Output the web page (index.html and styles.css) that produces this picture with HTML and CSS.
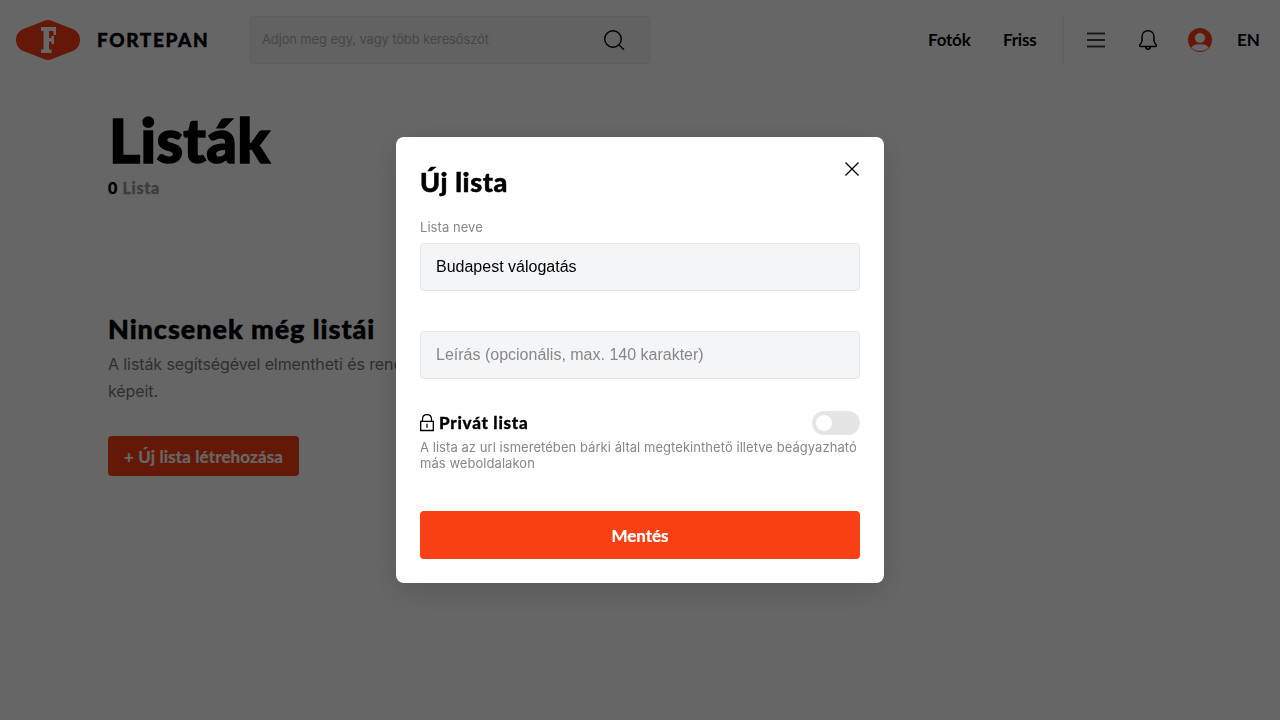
FILE: index.html
```html
<!DOCTYPE html>
<html lang="hu">
<head>
<meta charset="utf-8">
<title>Fortepan – Listák</title>
<link rel="stylesheet" href="styles.css">
</head>
<body>
<header class="header">
  <a class="brand">
    <svg class="brand-logo" width="64" height="40" viewBox="0 0 64 40">
      <path d="M28 .9Q32-.8 36 .9L58 9.500Q64 13 64 20T58 30.500L36 39.100Q32 40.800 28 39.100L6 30.500Q0 27 0 20T6 9.500Z" fill="#f93f14"/>
      <path d="M25 7H40V15H37.500V11H33V18H35.500V16H38V24H35.500V21.500H33V29.500H35.500V33H25V29.500H27.500V11H25Z" fill="#fff"/>
    </svg>
    <span class="brand-name">FORTEPAN</span>
  </a>
  <div class="search">
    <span class="search-text">Adjon meg egy, vagy több keresőszót</span>
    <svg width="24" height="24" viewBox="0 0 24 24" fill="none" stroke="#000" stroke-width="1.400"><circle cx="11" cy="11" r="8.300"/><path d="M17 17l5 4.800"/></svg>
  </div>
  <nav class="nav">
    <a class="nav-photos">Fotók</a>
    <a class="nav-fresh">Friss</a>
    <div class="nav-tools">
      <svg width="24" height="24" viewBox="0 0 24 24" stroke="#444" stroke-width="1.800"><path d="M3 5.500h18M3 12h18M3 18.500h18"/></svg>
      <svg width="24" height="24" viewBox="0 0 24 24" fill="none" stroke="#000" stroke-width="1.500" stroke-linejoin="round"><path d="M12 2.700C8.300 2.700 6 5.300 6 9v3.500C6 15.400 3.600 15.700 3.600 17.600c0 .8.500 1 1.200 1h14.400c.7 0 1.200-.2 1.200-1 0-1.900-2.400-2.200-2.400-5.100V9c0-3.700-2.300-6.300-6-6.300zM9.700 18.900c.2 1.600 1 2.400 2.300 2.400s2.100-.8 2.300-2.400"/></svg>
      <svg width="24" height="24" viewBox="0 0 24 24"><circle cx="12" cy="12" r="12" fill="#f93f14"/><path d="M3.300 19.500C5.500 16.900 8.400 16 12 16s6.500.9 8.700 3.500C18.500 22 15.300 23 12 23s-6.500-1-8.700-3.500z" fill="#fff"/><circle cx="12" cy="10" r="5.800" fill="#fff" stroke="#f93f14" stroke-width="1.400"/></svg>
      <a class="nav-lang">EN</a>
    </div>
  </nav>
</header>
<main class="page">
  <h1 class="page-title">Listák</h1>
  <p class="count"><span class="count-value">0</span> Lista</p>
  <section class="empty">
    <h2 class="empty-title">Nincsenek még listái</h2>
    <p class="empty-text">A listák segítségével elmentheti és rendezheti képeit.</p>
    <button class="create"><span class="create-label">+ Új lista létrehozása</span></button>
  </section>
</main>
<div class="overlay">
  <div class="dialog">
    <div class="dialog-head">
      <h2 class="dialog-title">Új lista</h2>
      <svg class="close" width="16" height="16" viewBox="0 0 16 16" stroke="#000" stroke-width="1.300"><path d="M1.500 1.500l13 13M14.500 1.500l-13 13"/></svg>
    </div>
    <div class="label">Lista neve</div>
    <div class="field"><span class="field-value">Budapest válogatás</span></div>
    <div class="field field-second"><span class="field-placeholder">Leírás (opcionális, max. 140 karakter)</span></div>
    <div class="private">
      <svg width="14" height="18" viewBox="0 0 14 18" fill="none" stroke="#000" stroke-width="1.300"><path d="M.7 7.300h12.600v9.200H.7zM2.500 7.300V5.200C2.500 2.500 4.300.7 7 .7s4.500 1.800 4.500 4.500v2.100M7 9.800v4"/></svg>
      <span class="private-title">Privát lista</span>
      <span class="toggle"></span>
    </div>
    <p class="help">A lista az url ismeretében bárki által megtekinthető illetve beágyazható<br>más weboldalakon</p>
    <button class="save"><span class="save-label">Mentés</span></button>
  </div>
</div>
</body>
</html>
```
FILE: styles.css
```css
* { box-sizing: border-box; margin: 0; padding: 0; }
body { width: 1280px; height: 720px; overflow: hidden; background: #fff; color: #000; font-family: Inter, sans-serif; }
svg { display: block; flex: none; }
button { border: 0; font: inherit; }
span, a { white-space: nowrap; }

.header { display: flex; align-items: center; height: 80px; padding: 0 20px 0 16px; }
.brand { display: flex; align-items: center; width: 234px; }
.brand-name { margin-left: 17px; font: 900 19px/24px Lato, sans-serif; letter-spacing: 1.6px; -webkit-text-stroke: .4px; }
.search { display: flex; align-items: center; justify-content: space-between; width: 400px; height: 48px; padding: 0 23px 0 11px; background: #f4f4f8; border: 1px solid #e8e8ec; border-radius: 4px; }
.search-text { font-size: 13px; line-height: 20px; color: #b0b0b0; padding-bottom: 3px; letter-spacing: -.14px; }
.nav { display: flex; align-items: center; margin-left: auto; font: 700 17px/24px Lato, sans-serif; }
.nav-photos { width: 75px; letter-spacing: -.2px; }
.nav-fresh { width: 60px; letter-spacing: -.2px; }
.nav-tools { display: flex; align-items: center; gap: 28px; height: 48px; padding-left: 20px; border-left: 1px solid #eee; }
.nav-lang { width: 23px; margin-left: -3px; }

.page { padding: 20px 108px 0; }
.page-title { height: 76px; font: 900 60px/80px Lato, sans-serif; letter-spacing: .3px; -webkit-text-stroke: 1.6px; padding-left: 1px; }
.count { font: 900 16px/24px Lato, sans-serif; color: #999; letter-spacing: .7px; -webkit-text-stroke: .3px; }
.count-value { color: #000; }
.empty { width: 360px; padding-top: 112px; }
.empty-title { font: 900 27px/34px Lato, sans-serif; white-space: nowrap; letter-spacing: .95px; -webkit-text-stroke: .5px; }
.empty-text { padding-top: 5px; font-size: 16px; line-height: 27px; color: #777; letter-spacing: -.1px; }
.create { display: block; width: 191px; height: 40px; margin-top: 31px; background: #f93f14; color: #fff; border-radius: 4px; font: 700 17px/41px Lato, sans-serif; letter-spacing: .12px; -webkit-text-stroke: .2px; }

.overlay { position: fixed; inset: 0; display: flex; align-items: center; justify-content: center; background: rgba(0, 0, 0, .6); }
.dialog { width: 488px; height: 446px; padding: 24px; background: #fff; border-radius: 8px; box-shadow: 0 8px 32px rgba(0, 0, 0, .15); }
.dialog-head { display: flex; justify-content: space-between; height: 56px; }
.dialog-title { font: 900 27px/42px Lato, sans-serif; letter-spacing: .6px; -webkit-text-stroke: .5px; }
.label { height: 26px; font-size: 13px; line-height: 21px; color: #888; letter-spacing: .05px; }
.field { display: flex; align-items: center; height: 48px; padding: 0 15px; background: #f4f5f7; border: 1px solid #e4e5e7; border-radius: 4px; font: 16px/24px "Liberation Sans", sans-serif; }
.field-second { margin-top: 40px; }
.field-placeholder { color: #888; }
.private { display: flex; align-items: center; height: 24px; margin-top: 32px; }
.private-title { margin-left: 5px; font: 900 17px/24px Lato, sans-serif; letter-spacing: .73px; -webkit-text-stroke: .3px; }
.toggle { display: flex; align-items: center; width: 48px; height: 24px; margin-left: auto; padding: 4px; background: #e5e5e5; border-radius: 12px; }
.toggle::before { content: ""; width: 16px; height: 16px; background: #fff; border-radius: 50%; }
.help { height: 36px; padding-top: 4px; font-size: 13px; line-height: 16px; color: #888; white-space: nowrap; letter-spacing: .05px; }
.save { display: block; width: 440px; height: 48px; margin-top: 40px; background: #f93f14; color: #fff; border-radius: 4px; font: 700 17px/49px Lato, sans-serif; -webkit-text-stroke: .2px; }
```
